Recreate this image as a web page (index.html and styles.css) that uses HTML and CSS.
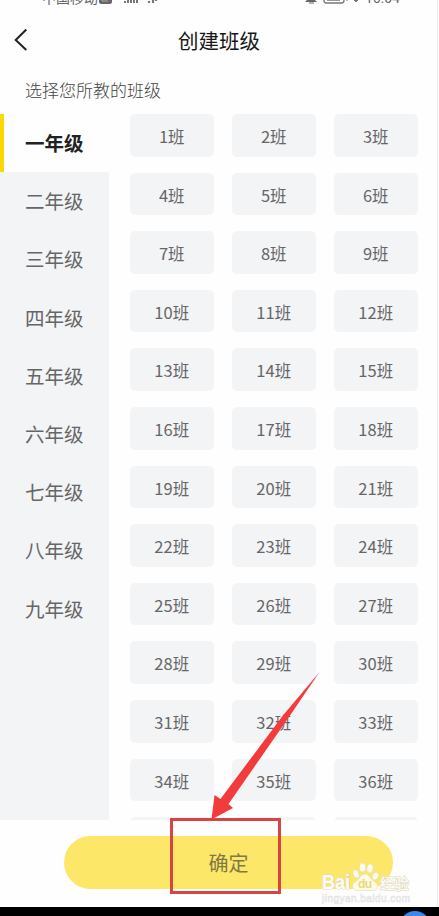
FILE: index.html
```html
<!DOCTYPE html>
<html lang="zh-CN">
<head>
<meta charset="utf-8">
<title>创建班级</title>
<link rel="stylesheet" href="styles.css">
</head>
<body>
<div class="screen">
  <div class="status">
    <span class="carrier">中国移动</span>
    <svg class="signals" width="64" height="6" viewBox="0 0 64 6"><rect x="0" y="-5" width="13" height="9" rx="2.5" fill="#666"/><path d="M3 0v1h6" stroke="#aaa" fill="none"/><path d="M26 1v2M29 0v3M32 0v3M35 0v3M38 0v3" stroke="#777" stroke-width="2"/><path d="M50 1v2M54 0v3M57 0v1" stroke="#777" stroke-width="2.2"/></svg>
    <svg class="power" width="54" height="6" viewBox="0 0 54 6"><path d="M0 2l3-3h6l3 3zM4 2.5h5v1H4z" fill="#666"/><rect x="19" y="-6" width="20" height="9" rx="2.5" fill="none" stroke="#777" stroke-width="1.3"/><path d="M22 0h13" stroke="#777" stroke-width="1.5"/><path d="M41 0h2M49 0h4l-2 2z" stroke="#777" fill="#777"/></svg>
    <span class="clock">16:04</span>
  </div>
  <header class="titlebar">
    <svg class="back" width="14" height="24" viewBox="0 0 14 24"><path d="M12.3 1.5L1.7 12l10.6 10" fill="none" stroke="#222" stroke-width="2"/></svg>
    <h1>创建班级</h1>
  </header>
  <p class="hint">选择您所教的班级</p>
  <main class="picker">
    <nav class="grades">
      <div class="grade active">一年级</div><div class="grade">二年级</div><div class="grade">三年级</div>
      <div class="grade">四年级</div><div class="grade">五年级</div><div class="grade">六年级</div>
      <div class="grade">七年级</div><div class="grade">八年级</div><div class="grade">九年级</div>
    </nav>
    <section class="classes">
      <div class="cell">1班</div><div class="cell">2班</div><div class="cell">3班</div>
      <div class="cell">4班</div><div class="cell">5班</div><div class="cell">6班</div>
      <div class="cell">7班</div><div class="cell">8班</div><div class="cell">9班</div>
      <div class="cell">10班</div><div class="cell">11班</div><div class="cell">12班</div>
      <div class="cell">13班</div><div class="cell">14班</div><div class="cell">15班</div>
      <div class="cell">16班</div><div class="cell">17班</div><div class="cell">18班</div>
      <div class="cell">19班</div><div class="cell">20班</div><div class="cell">21班</div>
      <div class="cell">22班</div><div class="cell">23班</div><div class="cell">24班</div>
      <div class="cell">25班</div><div class="cell">26班</div><div class="cell">27班</div>
      <div class="cell">28班</div><div class="cell">29班</div><div class="cell">30班</div>
      <div class="cell">31班</div><div class="cell">32班</div><div class="cell">33班</div>
      <div class="cell">34班</div><div class="cell">35班</div><div class="cell">36班</div>
      <div class="cell"></div><div class="cell"></div><div class="cell"></div>
    </section>
  </main>
  <footer class="actions"><div class="confirm">确定</div></footer>
  <div class="bottom"><svg width="34" height="8" viewBox="0 0 34 8"><circle cx="16" cy="19" r="16" fill="#3988ee"/></svg></div>
  <svg class="annotation" width="439" height="916" viewBox="0 0 439 916">
    <rect x="171.5" y="819.5" width="108" height="73" fill="none" stroke="#d94343" stroke-width="3"/>
    <path d="M319.5 672L282.500 716L220.500 799L214.500 795L211.500 819.500L233 808L228.500 804L289 717Z" fill="#f43b3b"/>
  </svg>
  <svg class="watermark" width="100" height="48" viewBox="0 0 100 48">
    <g class="wm-paw">
      <ellipse cx="36" cy="16" rx="3" ry="4.2" transform="rotate(-20 36 16)"/>
      <ellipse cx="42.5" cy="9.5" rx="3.2" ry="4.5"/>
      <ellipse cx="50" cy="10.5" rx="3.2" ry="4.5" transform="rotate(10 50 10.5)"/>
      <ellipse cx="55.5" cy="18" rx="3" ry="4.2" transform="rotate(25 55.5 18)"/>
      <path d="M45 16c4 0 5 4 8 6.500c4 2.500 5.500 4.500 4 8c-1.500 3-6 1.800-12 1.800s-10.500 1.200-12-1.800s0-5.500 4-8c3-2.500 4-6.500 8-6.500z"/>
    </g>
    <text class="wm-brand" x="2" y="30.500" textLength="28" lengthAdjust="spacingAndGlyphs">Bai</text>
    <text class="wm-cn" x="60" y="30.500" textLength="29" lengthAdjust="spacingAndGlyphs">经验</text>
    <text class="wm-du" x="38" y="29.500" textLength="14">du</text>
    <text class="wm-url" x="2" y="43.500" textLength="88">jingyan.baidu.com</text>
  </svg>
</div>
</body>
</html>
```
FILE: styles.css
```css
* { box-sizing: border-box; }
body {
  margin: 0;
  background: #fefefe;
  font-family: "Noto Sans CJK SC", sans-serif;
  color: #666;
}
.screen {
  position: relative;
  width: 439px;
  height: 916px;
  overflow: hidden;
  display: flex;
  flex-direction: column;
  background: linear-gradient(#e9e9e9, #e9e9e9) 437px 0 / 1px 100% no-repeat, #fefefe;
}
.status {
  height: 7px;
  flex: none;
  overflow: hidden;
  display: flex;
  align-items: flex-start;
  padding-left: 42px;
  font-size: 14px;
  line-height: 14px;
}
.carrier { width: 57px; margin-top: -10px; }
.signals { display: block; }
.power { display: block; margin-left: 142px; }
.clock {
  margin: -9px 0 0 6px;
  font: 14px/14px Roboto, sans-serif;
}
.titlebar {
  height: 67px;
  flex: none;
  display: flex;
  align-items: center;
  padding-left: 14px;
}
.back { margin-top: -2px; }
.titlebar h1 {
  width: 84px;
  margin: -2px 0 0 150px;
  font-size: 20.5px;
  line-height: 30px;
  font-weight: 400;
  color: #171717;
  white-space: nowrap;
}
.hint {
  height: 40px;
  flex: none;
  margin: 0;
  padding-left: 25px;
  font-size: 17px;
  line-height: 32px;
  font-weight: 300;
  color: #444;
}
.picker {
  height: 706px;
  flex: none;
  display: flex;
  align-items: stretch;
  overflow: hidden;
}
.grades {
  width: 109px;
  background: #f3f4f6;
  font-size: 19.5px;
}
.grade {
  height: 58.2px;
  padding-left: 25px;
  line-height: 58px;
}
.grade.active {
  background: #fefefe;
  border-left: 4px solid #fbd800;
  padding-left: 21px;
  color: #222;
  font-weight: 700;
}
.classes {
  margin-left: 20.5px;
  display: grid;
  grid-template-columns: repeat(3, 84.5px);
  grid-auto-rows: 42.6px;
  gap: 16px 17.5px;
}
.cell {
  border-radius: 5px;
  background: #f3f4f6;
  font-size: 16.5px;
  line-height: 44px;
  text-align: center;
}
.actions {
  height: 87px;
  flex: none;
  padding: 15.5px 46px 0 64px;
}
.confirm {
  height: 53.5px;
  border-radius: 27px;
  background: #fce769;
  color: #817944;
  font-size: 20px;
  line-height: 53px;
  text-align: center;
}
.bottom {
  height: 9px;
  flex: none;
  display: flex;
  justify-content: flex-end;
  align-items: flex-end;
  padding-right: 6px;
  background: #000;
}
.bottom svg { display: block; }
.annotation {
  position: absolute;
  left: 0;
  top: 0;
}
.watermark {
  position: absolute;
  left: 320px;
  top: 858px;
}
.wm-paw {
  fill: #fffbe6;
  stroke: #e0dbc0;
  stroke-width: .7px;
}
.wm-brand,
.wm-cn {
  fill: #fffdf2;
  stroke: #dedac8;
  stroke-width: 1.2px;
  paint-order: stroke;
}
.wm-brand { font: 700 20px "Liberation Sans", sans-serif; }
.wm-cn { font: 500 15px "Noto Sans CJK SC", sans-serif; }
.wm-du { font: 700 12px "Liberation Sans", sans-serif; fill: #e8d87a; }
.wm-url {
  font: 10px "Liberation Sans", sans-serif;
  fill: #fff;
  stroke: #e2e2e2;
  stroke-width: .6px;
}
```
